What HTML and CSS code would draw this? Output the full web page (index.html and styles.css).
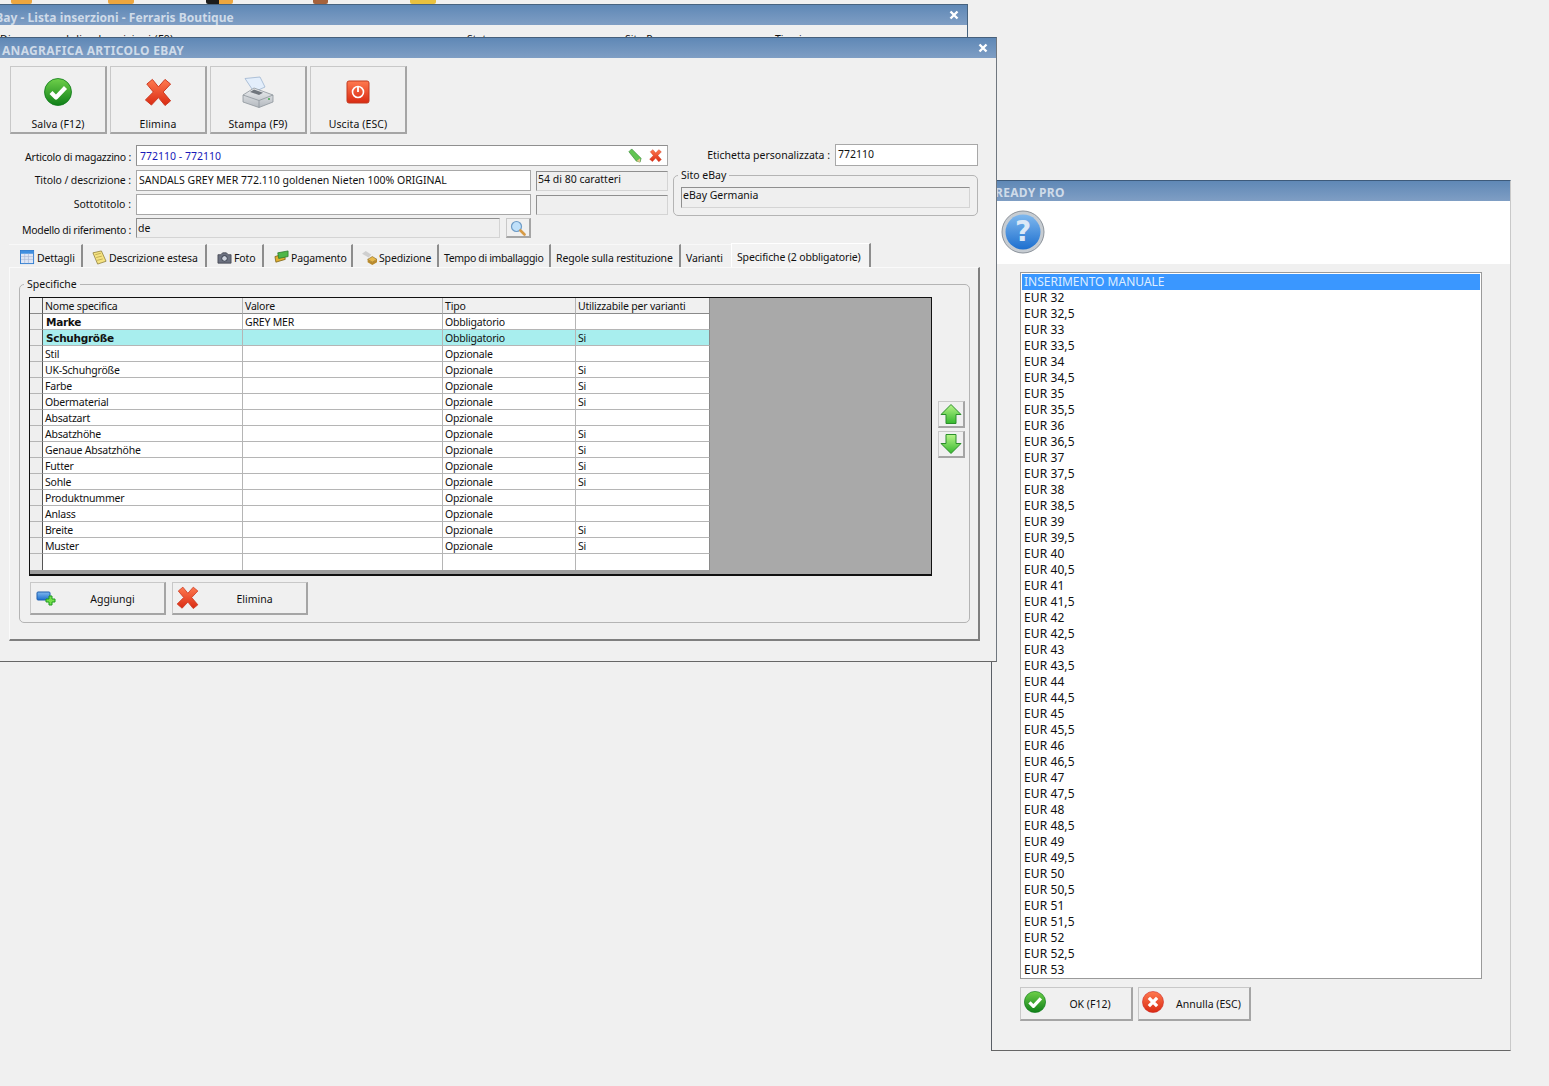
FILE: index.html
```html
<!DOCTYPE html>
<html lang="it">
<head>
<meta charset="utf-8">
<title>Anagrafica articolo eBay</title>
<link rel="stylesheet" href="styles.css">
</head>
<body>
<svg class="defs" width="0" height="0" aria-hidden="true">
  <defs>
    <linearGradient id="gGreen" x1="0" y1="0" x2="0" y2="1"><stop offset="0" stop-color="#6fd04a"/><stop offset="1" stop-color="#0f7f18"/></linearGradient>
    <linearGradient id="gRed" x1="0" y1="0" x2="0" y2="1"><stop offset="0" stop-color="#ff7a50"/><stop offset="1" stop-color="#d92a12"/></linearGradient>
    <linearGradient id="gArrow" x1="0" y1="0" x2="0" y2="1"><stop offset="0" stop-color="#b8f58a"/><stop offset="1" stop-color="#35b82e"/></linearGradient>
    <linearGradient id="gBlue" x1="0" y1="0" x2="0" y2="1"><stop offset="0" stop-color="#7fb8ee"/><stop offset="1" stop-color="#1d6fcf"/></linearGradient>
    <linearGradient id="gGrey" x1="0" y1="0" x2="0" y2="1"><stop offset="0" stop-color="#eceef0"/><stop offset="1" stop-color="#b4b9bf"/></linearGradient>
    <symbol id="okIcon" viewBox="0 0 28 28"><circle cx="14" cy="14" r="13.5" fill="url(#gGreen)" stroke="#0c7a18" stroke-width=".8"/><path d="M7 14.500l5 5L21.500 9.500" fill="none" stroke="#fff" stroke-width="4.200" stroke-linejoin="round"/></symbol>
    <symbol id="xIcon" viewBox="0 0 30 30"><path d="M3 6.500L9 1.500l6.500 8L22.500 1.500 28.500 6.500 20.500 15l8 9.500-6 5-7-8.500L8 29 1.500 23.500 10 15z" fill="url(#gRed)" stroke="#c9331a" stroke-width="1" stroke-linejoin="round"/></symbol>
    <symbol id="roundX" viewBox="0 0 24 24"><circle cx="12" cy="12" r="11.500" fill="url(#gRed)" stroke="#c22" stroke-width=".6"/><path d="M7.500 7.500l9 9M16.500 7.500l-9 9" stroke="#fff" stroke-width="3.600"/></symbol>
    <symbol id="upIcon" viewBox="0 0 22 22"><path d="M11 1.500L21 11.500h-5v9H6v-9H1z" fill="url(#gArrow)" stroke="#2b8f2b" stroke-linejoin="round"/></symbol>
    <symbol id="downIcon" viewBox="0 0 22 22"><path d="M11 20.500L21 10.500h-5v-9H6v9H1z" fill="url(#gArrow)" stroke="#2b8f2b" stroke-linejoin="round"/></symbol>
    <symbol id="closeIcon" viewBox="0 0 10 10"><path d="M1.500 1.500l7 7M8.500 1.500l-7 7" stroke="#fff" stroke-width="2.400"/></symbol>
  </defs>
</svg>

<div class="desk-icons">
  <span class="desk-icon desk-a"></span>
  <span class="desk-icon desk-b"></span>
  <span class="desk-icon desk-c"></span>
  <span class="desk-icon desk-d"></span>
  <span class="desk-icon desk-e"></span>
</div>

<!-- Background window -->
<section class="win win-back">
  <header class="titlebar"><span class="title-text back-title">eBay - Lista inserzioni - Ferraris Boutique</span><svg class="close"><use href="#closeIcon"/></svg></header>
  <div class="back-columns"><span class="bc-1">Disegna moduli e descrizioni (F9)</span><span class="bc-2">Stato</span><span class="bc-3">Sito P</span><span class="bc-4">Tipo inser</span></div>
</section>

<!-- Dialog -->
<section class="win win-dialog">
  <header class="titlebar dialog-title"><span class="title-text">READY PRO</span></header>
  <div class="dialog-banner">
    <svg class="q-icon" viewBox="0 0 44 44">
      <circle cx="22" cy="22" r="21" fill="#c6ccd2" stroke="#8d949c"/>
      <circle cx="22" cy="22" r="17.500" fill="url(#gBlue)"/>
      <text x="22" y="31" class="q-mark">?</text>
    </svg>
  </div>
  <div class="dialog-body">
    <ul class="listbox">
      <li class="selected">INSERIMENTO MANUALE</li>
      <li>EUR 32</li><li>EUR 32,5</li><li>EUR 33</li><li>EUR 33,5</li><li>EUR 34</li><li>EUR 34,5</li>
      <li>EUR 35</li><li>EUR 35,5</li><li>EUR 36</li><li>EUR 36,5</li><li>EUR 37</li><li>EUR 37,5</li>
      <li>EUR 38</li><li>EUR 38,5</li><li>EUR 39</li><li>EUR 39,5</li><li>EUR 40</li><li>EUR 40,5</li>
      <li>EUR 41</li><li>EUR 41,5</li><li>EUR 42</li><li>EUR 42,5</li><li>EUR 43</li><li>EUR 43,5</li>
      <li>EUR 44</li><li>EUR 44,5</li><li>EUR 45</li><li>EUR 45,5</li><li>EUR 46</li><li>EUR 46,5</li>
      <li>EUR 47</li><li>EUR 47,5</li><li>EUR 48</li><li>EUR 48,5</li><li>EUR 49</li><li>EUR 49,5</li>
      <li>EUR 50</li><li>EUR 50,5</li><li>EUR 51</li><li>EUR 51,5</li><li>EUR 52</li><li>EUR 52,5</li>
      <li>EUR 53</li>
    </ul>
    <div class="dialog-actions">
      <button class="btn btn-row btn-ok"><svg class="ico-22"><use href="#okIcon"/></svg><span>OK (F12)</span></button>
      <button class="btn btn-row btn-cancel"><svg class="ico-22"><use href="#roundX"/></svg><span>Annulla (ESC)</span></button>
    </div>
  </div>
</section>

<!-- Main window -->
<section class="win win-main">
  <header class="titlebar"><span class="title-text">ANAGRAFICA ARTICOLO EBAY</span><svg class="close"><use href="#closeIcon"/></svg></header>
  <div class="main-body">
    <div class="toolbar">
      <button class="btn btn-big"><svg class="ico-big"><use href="#okIcon"/></svg><span>Salva (F12)</span></button>
      <button class="btn btn-big"><svg class="ico-big"><use href="#xIcon"/></svg><span>Elimina</span></button>
      <button class="btn btn-big">
        <svg class="ico-big ico-print" viewBox="0 0 32 32">
          <path d="M3 2.500L18 1l5 10-11 5z" fill="#e3eefb" stroke="#9db4cf" stroke-width=".8"/>
          <path d="M1 19l11-7 19 7v7l-14 5.500L1 26z" fill="url(#gGrey)" stroke="#8e959c" stroke-width=".8"/>
          <path d="M1 19l16 5.500L31 19M17 24.500v7" fill="none" stroke="#8e959c" stroke-width=".8"/>
          <path d="M8 16l4-2.500 9 3.300-4 2.200z" fill="#70767d"/>
          <circle cx="27" cy="23" r="1" fill="#3fa648"/>
        </svg>
        <span>Stampa (F9)</span></button>
      <button class="btn btn-big">
        <svg class="ico-big" viewBox="0 0 28 28">
          <rect x="3" y="3" width="22" height="22" rx="2" fill="url(#gRed)" stroke="#c23b20"/>
          <circle cx="14" cy="14" r="5.500" fill="none" stroke="#fff" stroke-width="1.600"/>
          <path d="M14 9v5" stroke="#fff" stroke-width="1.800"/>
        </svg>
        <span>Uscita (ESC)</span></button>
    </div>

    <div class="form">
      <label class="lbl lbl-1">Articolo di magazzino :</label>
      <div class="field field-article">
        <span class="link-text">772110 - 772110</span>
        <svg class="mini" viewBox="0 0 16 16"><path d="M2 4l3-3 10 10-1 4-4-1z" fill="#62c653" stroke="#3c8a3a" stroke-width=".7"/><path d="M14 15l-4-1 4-3z" fill="#e9c58f"/></svg>
        <svg class="mini mini-x"><use href="#xIcon"/></svg>
      </div>
      <div class="etichetta">
        <label class="lbl">Etichetta personalizzata :</label>
        <div class="field field-tag">772110</div>
      </div>

      <label class="lbl lbl-2">Titolo / descrizione :</label>
      <div class="field field-title">SANDALS GREY MER 772.110 goldenen Nieten 100% ORIGINAL</div>
      <div class="field-ro info-1">54 di 80 caratteri</div>
      <fieldset class="group site-group">
        <legend>Sito eBay</legend>
        <div class="field-ro site-field">eBay Germania</div>
      </fieldset>

      <label class="lbl lbl-3">Sottotitolo :</label>
      <div class="field field-sub"></div>
      <div class="field-ro info-2"></div>

      <label class="lbl lbl-4">Modello di riferimento :</label>
      <div class="model-row">
        <div class="field-ro model-field">de</div>
        <button class="btn btn-search">
          <svg class="ico-16" viewBox="0 0 16 16"><circle cx="6.500" cy="6.500" r="5" fill="#bfe0fa" stroke="#6f9cc6" stroke-width="1.200"/><path d="M10.500 10.500l4 4" stroke="#d69a45" stroke-width="2.600" stroke-linecap="round"/></svg>
        </button>
      </div>
    </div>

    <nav class="tabs">
      <span class="tab tab-1"><svg class="ico-tab" viewBox="0 0 16 16"><rect x=".5" y=".5" width="14" height="14" fill="#dfe6f5" stroke="#2f7ccf"/><rect x="1" y="1" width="13" height="3" fill="#3f8fe0"/><path d="M1 7h13M1 10h13M5 4v10M9 4v10" stroke="#a9b8d6" stroke-width=".7"/></svg>Dettagli</span>
      <span class="tab tab-2"><svg class="ico-tab" viewBox="0 0 16 16"><path d="M1 3l9-2 5 11-9 3z" fill="#f6e382" stroke="#8a7a34" stroke-width=".8"/><path d="M3.500 5l6-1.500M4.500 8l6-1.500M5.500 11l6-1.500" stroke="#a8943e" stroke-width=".7"/></svg>Descrizione estesa</span>
      <span class="tab tab-3"><svg class="ico-tab" viewBox="0 0 16 16"><path d="M1 5h3l2-2h4l2 2h3v9H1z" fill="#6c7180" stroke="#3c3f4a" stroke-width=".8"/><circle cx="8" cy="9" r="3" fill="#cfd4de" stroke="#333a48"/></svg>Foto</span>
      <span class="tab tab-4"><svg class="ico-tab" viewBox="0 0 16 16"><path d="M1 7l10-3 1 6-10 3z" fill="#e0b030" stroke="#77601a" stroke-width=".8"/><path d="M4 3l11-2v6L5 9z" fill="#4eb648" stroke="#2a7a2a" stroke-width=".8"/></svg>Pagamento</span>
      <span class="tab tab-5"><svg class="ico-tab" viewBox="0 0 16 16"><path d="M0 4l4-3 6 4-3 3z" fill="#cfcfcf"/><path d="M6 10l5-3 5 3-5 3z" fill="#e7b84b" stroke="#8a6a20" stroke-width=".7"/><path d="M6 10v3l5 3v-3zM16 10v3l-5 3v-3z" fill="#b98a2c"/></svg>Spedizione</span>
      <span class="tab tab-6">Tempo di imballaggio</span>
      <span class="tab tab-7">Regole sulla restituzione</span>
      <span class="tab tab-8">Varianti</span>
      <span class="tab tab-active">Specifiche (2 obbligatorie)</span>
    </nav>

    <div class="panel">
      <fieldset class="group spec-group">
        <legend>Specifiche</legend>
        <div class="spec-row">
          <div class="grid-box">
            <table class="grid">
              <colgroup><col class="c0"><col class="c1"><col class="c2"><col class="c3"><col class="c4"></colgroup>
              <thead><tr><th></th><th>Nome specifica</th><th>Valore</th><th>Tipo</th><th>Utilizzabile per varianti</th></tr></thead>
              <tbody>
                <tr><th></th><td class="strong">Marke</td><td>GREY MER</td><td>Obbligatorio</td><td></td></tr>
                <tr class="hl"><th></th><td class="strong">Schuhgröße</td><td></td><td>Obbligatorio</td><td>Si</td></tr>
                <tr><th></th><td>Stil</td><td></td><td>Opzionale</td><td></td></tr>
                <tr><th></th><td>UK-Schuhgröße</td><td></td><td>Opzionale</td><td>Si</td></tr>
                <tr><th></th><td>Farbe</td><td></td><td>Opzionale</td><td>Si</td></tr>
                <tr><th></th><td>Obermaterial</td><td></td><td>Opzionale</td><td>Si</td></tr>
                <tr><th></th><td>Absatzart</td><td></td><td>Opzionale</td><td></td></tr>
                <tr><th></th><td>Absatzhöhe</td><td></td><td>Opzionale</td><td>Si</td></tr>
                <tr><th></th><td>Genaue Absatzhöhe</td><td></td><td>Opzionale</td><td>Si</td></tr>
                <tr><th></th><td>Futter</td><td></td><td>Opzionale</td><td>Si</td></tr>
                <tr><th></th><td>Sohle</td><td></td><td>Opzionale</td><td>Si</td></tr>
                <tr><th></th><td>Produktnummer</td><td></td><td>Opzionale</td><td></td></tr>
                <tr><th></th><td>Anlass</td><td></td><td>Opzionale</td><td></td></tr>
                <tr><th></th><td>Breite</td><td></td><td>Opzionale</td><td>Si</td></tr>
                <tr><th></th><td>Muster</td><td></td><td>Opzionale</td><td>Si</td></tr>
                <tr class="last"><th></th><td></td><td></td><td></td><td></td></tr>
              </tbody>
            </table>
          </div>
          <div class="arrows">
            <button class="btn btn-arrow"><svg class="ico-arrow"><use href="#upIcon"/></svg></button>
            <button class="btn btn-arrow"><svg class="ico-arrow"><use href="#downIcon"/></svg></button>
          </div>
        </div>
        <div class="grid-actions">
          <button class="btn btn-row btn-add">
            <svg class="ico-add" viewBox="0 0 20 18"><rect x="1" y="2" width="13" height="8" rx="1" fill="url(#gBlue)" stroke="#1f5fae"/><path d="M11 8h3V5h3v3h3v3h-3v3h-3v-3h-3z" transform="translate(-1 1)" fill="#74e04a" stroke="#1e9a1e"/></svg>
            <span>Aggiungi</span></button>
          <button class="btn btn-row btn-del"><svg class="ico-del"><use href="#xIcon"/></svg><span>Elimina</span></button>
        </div>
      </fieldset>
    </div>
  </div>
</section>
</body>
</html>
```

FILE: styles.css
```css
* { box-sizing: border-box; }
html, body { margin: 0; height: 100%; }
body {
  position: relative;
  width: 1549px;
  height: 1086px;
  overflow: hidden;
  background: #f0f0f0;
  color: #111;
  font-family: "Noto Sans", "Open Sans", sans-serif;
  font-size: 10.5px;
  line-height: 16px;
}
.defs { position: absolute; }

/* desktop icons peeking over the back window */
.desk-icons { position: absolute; left: 0; top: 0; width: 500px; height: 5px; overflow: hidden; }
.desk-icon { position: absolute; top: -8px; height: 12px; border-radius: 2px; background: #eda63f; }
.desk-a { left: 11px; width: 21px; }
.desk-b { left: 108px; width: 26px; }
.desk-c { left: 206px; width: 27px; background: linear-gradient(90deg, #1c1c1c 50%, #eda63f 50%); }
.desk-d { left: 313px; width: 15px; background: #a5623c; }
.desk-e { left: 410px; width: 26px; background: #e9c13f; }

/* windows on the desktop */
.win { position: absolute; background: #f0f0f0; }
.win-back { left: -6px; top: 4px; width: 974px; height: 33px; border: 1px solid #47637f; border-bottom: 0; overflow: hidden; }
.win-main { left: -6px; top: 37px; width: 1003px; height: 625px; border: 1px solid #46607c; border-right-color: #70777f; border-bottom-color: #666; }
.win-dialog { left: 991px; top: 180px; width: 520px; height: 871px; border: 1px solid #5a5f66; border-top-color: #3d5a7a; border-right-color: #c9c9c9; border-bottom-color: #666; }

.titlebar {
  display: flex;
  align-items: center;
  justify-content: space-between;
  height: 20px;
  padding: 0 8px 0 7px;
  background: linear-gradient(#5f88b6, #7f9ec4);
  color: #cfdbe9;
  font-family: "Noto Sans", sans-serif;
  font-weight: 700;
  font-size: 12px;
  letter-spacing: .3px;
  white-space: nowrap;
}
.title-text { margin-top: 5px; }
.back-title { margin-left: -14px; letter-spacing: .05px; }
.close { width: 10px; height: 10px; }
.back-columns { position: relative; height: 6px; margin-top: 6px; overflow: hidden; }
.back-columns span { position: absolute; top: 0; white-space: nowrap; }
.bc-1 { left: 5px; letter-spacing: .35px; }
.bc-2 { left: 472px; }
.bc-3 { left: 630px; }
.bc-4 { left: 780px; }

.main-body { padding: 8px 0 0 15px; }

/* buttons */
.btn {
  display: flex;
  align-items: center;
  margin: 0;
  padding: 0;
  background: #f0f0f0;
  border: 1px solid #c8c8c8;
  border-right: 2px solid #a5a5a5;
  border-bottom: 2px solid #a5a5a5;
  color: #111;
  font: inherit;
}
.toolbar { display: flex; gap: 3px; }
.btn-big {
  flex-direction: column;
  justify-content: space-between;
  width: 97px;
  height: 68px;
  padding: 11px 0 0;
  letter-spacing: .1px;
}
.ico-big { width: 28px; height: 28px; }
.ico-print { width: 32px; height: 32px; margin-top: -2px; }

/* header form */
.form {
  display: grid;
  grid-template-columns: 121px 395px 132px 305px;
  grid-template-rows: 25px 24px 24px 24px;
  column-gap: 5px;
  margin-top: 11px;
  height: 97px;
}
.lbl { text-align: right; white-space: nowrap; align-self: center; }
.lbl-1 { grid-area: 1 / 1; margin-bottom: 2px; letter-spacing: -.25px; }
.lbl-2 { grid-area: 2 / 1; margin-bottom: 4px; letter-spacing: -.1px; }
.lbl-3 { grid-area: 3 / 1; margin-bottom: 4px; }
.lbl-4 { grid-area: 4 / 1; letter-spacing: -.3px; }
.field, .field-ro { height: 21px; padding: 1px 2px; white-space: nowrap; overflow: hidden; }
.field { background: #fff; border: 1px solid #a8a8a8; }
.field-ro { background: #efefef; border: 1px solid #d4d4d4; border-top-color: #8f8f8f; border-left-color: #8f8f8f; }
.field-article {
  grid-area: 1 / 2 / 1 / 4;
  display: flex;
  align-items: center;
  gap: 5px;
  border-top-color: #8f8f8f;
  border-left-color: #8f8f8f;
}
.link-text { flex: 1; color: #1818b8; padding-left: 1px; }
.mini { width: 15px; height: 15px; margin-right: 2px; }
.mini-x { width: 13px; height: 13px; margin-right: 3px; }
.etichetta { grid-area: 1 / 4; display: flex; justify-content: flex-end; gap: 5px; margin-top: -1px; height: 22px; }
.field-tag { width: 143px; height: 22px; padding-left: 2px; }
.field-title { grid-area: 2 / 2; }
.field-sub { grid-area: 3 / 2; }
.info-1 { grid-area: 2 / 3; height: 20px; margin-top: 1px; padding: 0 1px; line-height: 15px; }
.info-2 { grid-area: 3 / 3; height: 20px; margin-top: 1px; }
.group { margin: 0; padding: 0; border: 1px solid #b4b4b4; border-radius: 5px; }
.group legend { padding: 0 3px; line-height: 14px; }
.site-group legend { margin-left: -3px; }
.spec-group legend { margin-left: -5px; }
.site-group { grid-area: 2 / 4 / 4 / 4; width: 305px; height: 48px; margin: 5px 0 0 0; padding: 0 7px 0 7px; position: relative; top: -7px; }
.site-field { height: 21px; margin-top: 5px; padding: 0 0 0 1px; line-height: 14px; }
.model-row { grid-area: 4 / 2 / 4 / 4; display: flex; gap: 6px; }
.model-field { width: 364px; height: 20px; padding: 1px 1px 0; }
.btn-search { width: 25px; height: 20px; justify-content: center; }
.ico-16 { width: 16px; height: 16px; }

/* tabs */
.tabs { display: flex; height: 25px; margin-left: -1px; align-items: flex-end; letter-spacing: -.15px; }
.tab {
  display: flex;
  align-items: center;
  height: 23px;
  padding-top: 3px;
  background: #f0f0f0;
  border-right: 2px solid #8d8d8d;
  border-top: 1px solid #f8f8f8;
  white-space: nowrap;
}
.ico-tab { width: 15px; height: 15px; flex: none; margin-right: 2px; }
.tab-1 { width: 74px; padding-left: 11px; }
.tab-2 { width: 124px; padding-left: 9px; }
.tab-3 { width: 57px; padding-left: 10px; }
.tab-4 { width: 89px; padding-left: 10px; }
.tab-5 { width: 86px; padding-left: 9px; }
.tab-6 { width: 112px; padding-left: 5px; letter-spacing: -.35px; }
.tab-7 { width: 130px; padding-left: 5px; }
.tab-8 { width: 50px; padding-left: 5px; border-right: 0; }
.tab-active { width: 140px; height: 24px; padding: 2px 0 0 5px; background: #f3f3f3; border-top: 1px solid #fff; border-left: 1px solid #fff; }

/* tab panel */
.panel {
  width: 971px;
  height: 374px;
  margin-left: -1px;
  padding: 9px 9px 0 9px;
  background: #f0f0f0;
  border: 1px solid #fafafa;
  border-right: 2px solid #7f7f7f;
  border-bottom: 2px solid #7f7f7f;
}
.spec-group { width: 951px; height: 346px; padding: 6px 0 0 9px; }
.spec-row { display: flex; gap: 6px; }
.grid-box { width: 903px; height: 279px; background: #a9a9a9; border: 1px solid #111; border-bottom-width: 2px; overflow: hidden; }
.grid { width: 680px; border-collapse: separate; border-spacing: 0; table-layout: fixed; background: #fff; border-bottom: 5px solid #9e9e9e; letter-spacing: -.2px; }
.c0 { width: 13px; }
.c1 { width: 200px; }
.c2 { width: 200px; }
.c3 { width: 133px; }
.c4 { width: 134px; }
.grid th, .grid td {
  height: 16px;
  padding: 2px 0 0 2px;
  line-height: 13px;
  font-weight: 400;
  text-align: left;
  white-space: nowrap;
  overflow: hidden;
  border-right: 1px solid #b5b5b5;
  border-bottom: 1px solid #b5b5b5;
}
.grid thead th { background: #f0f0f0; border-bottom-color: #8a8a8a; }
.grid tbody th { background: #efefef; border-right: 1px solid #555; }
.grid thead th:first-child { border-right-color: #555; }
.grid tr > :last-child { border-right-color: #8a8a8a; }
.grid .strong { padding-left: 3px; font-family: "DejaVu Sans", sans-serif; font-weight: 700; font-size: 10.5px; letter-spacing: -.3px; }
.grid .hl td { background: #a8eeee; }
.grid .last th, .grid .last td { height: 16px; border-bottom: 0; }
.arrows { display: flex; flex-direction: column; gap: 3px; padding-top: 104px; }
.btn-arrow { width: 27px; height: 27px; justify-content: center; }
.ico-arrow { width: 22px; height: 22px; }
.grid-actions { display: flex; gap: 6px; margin: 6px 0 0 1px; letter-spacing: -.4px; }
.btn-row { position: relative; justify-content: center; }
.btn-add, .btn-del { width: 136px; height: 33px; }
.btn-row span { margin: 1px 0 0 28px; }
.btn-add span, .btn-del span { margin-left: 30px; }
.ico-add { position: absolute; left: 5px; top: 7px; width: 20px; height: 18px; }
.ico-del { position: absolute; left: 3px; top: 3px; width: 23px; height: 23px; }

/* dialog */
.dialog-title { height: 20px; }
.dialog-title .title-text { margin: 4px 0 0 -4px; }
.dialog-banner { height: 63px; background: #fff; padding: 9px 0 0 9px; }
.q-icon { display: block; width: 44px; height: 44px; }
.q-mark { font-family: "DejaVu Sans", sans-serif; font-size: 28px; font-weight: 700; fill: #dbe8f7; text-anchor: middle; }
.dialog-body { padding: 8px 0 0 28px; }
.listbox {
  width: 462px;
  height: 707px;
  margin: 0;
  padding: 1px;
  list-style: none;
  background: #fff;
  border: 1px solid #9a9a9a;
  overflow: hidden;
  font-size: 12px;
}
.listbox li { height: 16px; padding-left: 2px; line-height: 16px; letter-spacing: .1px; }
.listbox .selected { background: #3a97ff; color: #dfeeff; letter-spacing: 0; }
.dialog-actions { display: flex; gap: 5px; margin-top: 8px; letter-spacing: .1px; }
.btn-ok, .btn-cancel { width: 113px; height: 34px; }
.btn-ok span { margin: 0 0 0 28px; }
.btn-cancel span { margin: 0 0 0 29px; }
.ico-22 { position: absolute; left: 3px; top: 3px; width: 22px; height: 22px; }
```
